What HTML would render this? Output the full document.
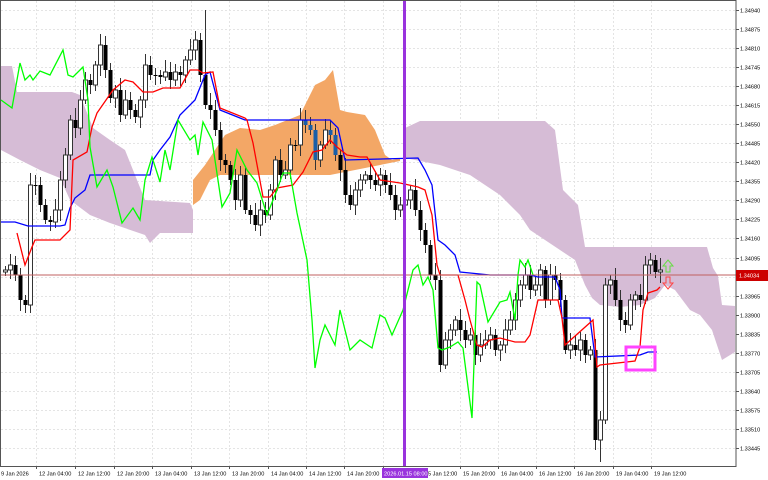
<!DOCTYPE html>
<html><head><meta charset="utf-8"><style>
html,body{margin:0;padding:0;background:#fff;width:768px;height:480px;overflow:hidden}
svg{display:block}
text{font-family:"Liberation Sans",sans-serif;font-size:5.6px;fill:#000}
</style></head><body>
<svg id="s" width="768" height="480" viewBox="0 0 768 480" xmlns="http://www.w3.org/2000/svg">
<g id="grid" stroke="#e4e4e4" stroke-dasharray="2,2" stroke-width="1"></g>
<polygon fill="#d6bcd6" points="1,66 12,66 17,92 72,92 80,95 93,128 110,140 125,150 135,175 145,200 190,203 193,210 193,233 160,233 150,243 145,235 110,223 90,215 70,200 60,178 40,170 20,160 1,150"/>
<polygon fill="#d6bcd6" points="405,128 420,121 545,121 555,130 563,190 578,205 585,247 707,247 713,268 718,276 722,305 735,306 735,352 722,360 712,330 700,315 690,310 675,290 665,285 655,298 640,305 620,307 600,305 592,298 585,285 575,260 560,250 545,240 530,230 520,215 500,195 470,175 440,165 405,158"/>
<polygon fill="#f3a766" points="193,180 205,165 215,150 225,135 240,128 260,130 275,125 300,115 315,85 325,80 333,70 340,110 347,112 365,115 375,130 385,155 392,160 400,158 400,161 330,175 310,175 220,175 210,180 200,200 193,205"/>
<g id="candles"></g>
<polyline fill="none" stroke="#0000ff" stroke-width="1.3" points="1,222 15,222 28,226 60,226 65,225 70,208 75,198 85,190 90,175 150,175 153,160 160,150 170,137 180,115 195,100 205,75 210,72 220,110 240,118 245,120 330,120 338,128 345,160 418,158 425,170 432,185 438,240 445,245 455,255 460,272 470,273 490,275 530,275 538,277 555,277 560,290 562,318 590,318 595,357 640,355 648,352 657,352"/>
<polyline fill="none" stroke="#ff0000" stroke-width="1.3" points="17,233 25,265 32,247 35,240 60,240 70,230 73,160 87,152 92,127 97,113 113,90 125,80 133,82 143,92 153,92 163,88 180,88 190,70 198,70 203,73 213,72 220,108 245,118 247,120 253,143 263,197 270,197 277,188 293,185 303,172 313,152 322,150 330,140 337,147 347,155 360,157 367,157 380,180 400,183 418,187 425,190 432,215 437,265 440,275 458,275 465,300 470,320 477,345 482,347 490,340 500,338 515,342 525,342 530,335 538,300 558,300 562,318 565,345 593,320 597,367 600,365 635,361 640,347 643,310 648,293 657,290 660,287"/>
<polyline fill="none" stroke="#00ff00" stroke-width="1.3" points="1,100 12,108 20,63 25,80 30,75 33,80 40,71 50,75 63,50 68,75 73,77 83,67 88,100 90,147 97,187 107,170 113,187 122,223 133,208 140,220 145,180 152,157 160,182 165,150 170,170 178,120 190,140 195,135 198,155 203,122 212,140 222,207 230,193 237,150 247,170 257,183 267,215 277,190 283,173 290,173 297,213 300,227 307,260 312,320 315,368 320,340 325,325 335,345 340,310 350,350 360,340 372,348 380,315 385,318 392,335 403,310 413,270 418,265 423,285 428,277 433,290 438,348 442,350 450,347 458,342 463,348 472,418 477,282 480,285 488,322 500,302 507,300 510,292 515,320 518,275 520,260 525,267 528,260 533,275"/>
<line x1="1" y1="275" x2="736" y2="275" stroke="#c06060" stroke-width="1"/>
<rect x="403" y="1" width="3" height="465" fill="#9933dd"/>
<rect x="626" y="347" width="29" height="23" fill="none" stroke="#ff44ff" stroke-width="3"/>
<path d="M668,260 L673,266 L670,266 L670,272 L666,272 L666,266 L663,266 Z" fill="none" stroke="#66dd44" stroke-width="1"/>
<path d="M668,289 L673,283 L670,283 L670,277 L666,277 L666,283 L663,283 Z" fill="none" stroke="#ff4444" stroke-width="1"/>
<rect x="0.5" y="0.5" width="735.5" height="466" fill="none" stroke="#555" stroke-width="1"/>
<g id="ax"></g>
<rect x="736" y="270" width="32" height="11" fill="#cc0000"/>
<text x="739" y="277.5" style="fill:#fff">1.34034</text>
<rect x="382" y="468" width="46" height="10" fill="#9933dd"/>
<text x="384" y="475.5" style="fill:#fff">2026.01.15 08:00</text>
</svg>
<script>
var s="http://www.w3.org/2000/svg";
function el(p,t,a,tx){var e=document.createElementNS(s,t);for(var k in a)e.setAttribute(k,a[k]);if(tx)e.textContent=tx;document.getElementById(p).appendChild(e);return e;}
var pl=["1.34940","1.34875","1.34810","1.34745","1.34680","1.34615","1.34550","1.34485","1.34420","1.34355","1.34290","1.34225","1.34160","1.34095","","1.33965","1.33900","1.33835","1.33770","1.33705","1.33640","1.33575","1.33510","1.33445"];
for(var i=0;i<24;i++){var y=Math.round(10+i*19.04);el("grid","line",{x1:1,y1:y+0.5,x2:735,y2:y+0.5});el("ax","line",{x1:736,y1:y+0.5,x2:739,y2:y+0.5,stroke:"#555"});if(pl[i])el("ax","text",{x:740,y:y+2.5},pl[i]);}
var tl=["9 Jan 2026","12 Jan 04:00","12 Jan 12:00","12 Jan 20:00","13 Jan 04:00","13 Jan 12:00","13 Jan 20:00","14 Jan 04:00","14 Jan 12:00","14 Jan 20:00","","5 Jan 12:00","15 Jan 20:00","16 Jan 04:00","16 Jan 12:00","16 Jan 20:00","19 Jan 04:00","19 Jan 12:00"];
var tx=[1,39,78,117,155,194,232,271,309,347,386,428,463,501,539,577,616,654];
for(var i=0;i<tl.length;i++){var x=tx[i];if(i>0&&i!=11)el("grid","line",{x1:x-2.5,y1:1,x2:x-2.5,y2:466});if(i!=11)el("ax","line",{x1:x-2.5,y1:466,x2:x-2.5,y2:469,stroke:"#555"});if(tl[i])el("ax","text",{x:x,y:475.5},tl[i]);}
var c=[270,265,275,300,305,185,185,205,220,222,210,180,155,120,128,100,80,85,65,45,70,98,90,115,100,110,117,100,65,75,75,77,72,80,72,75,60,50,40,75,105,110,130,160,165,180,200,175,210,215,225,210,215,190,160,175,170,145,145,120,125,130,160,145,130,135,155,170,195,205,190,180,175,180,185,175,185,195,210,205,200,190,210,230,245,275,280,365,340,330,320,330,340,335,355,345,340,335,350,345,330,320,300,285,275,290,285,270,300,275,280,300,350,345,350,340,355,350,440,420,285,280,300,320,325,300,295,300,265,260,272,270];
var o=272;
for(var i=0;i<c.length;i++){var x=5+i*5,cl=c[i],hi=Math.min(o,cl)-4-((i*7)%9),lo=Math.max(o,cl)+4+((i*5)%8);
 if(i==5)lo=313; if(i==40)hi=10; if(i==119)lo=462;
 el("candles","line",{x1:x+0.5,y1:hi,x2:x+0.5,y2:lo,stroke:"#333","stroke-width":1});
 var t=Math.min(o,cl),h=Math.max(Math.abs(o-cl),1);
 var inBlue=(x>300&&x<345&&cl<170);
 if(cl<o)el("candles","rect",{x:x-1.5,y:t,width:4,height:h,fill:"#fff",stroke:"#333","stroke-width":1});
 else el("candles","rect",{x:x-1.5,y:t,width:4,height:h,fill:inBlue?"#1a5fa8":"#000"});
 o=cl;}
</script>
</body></html>
